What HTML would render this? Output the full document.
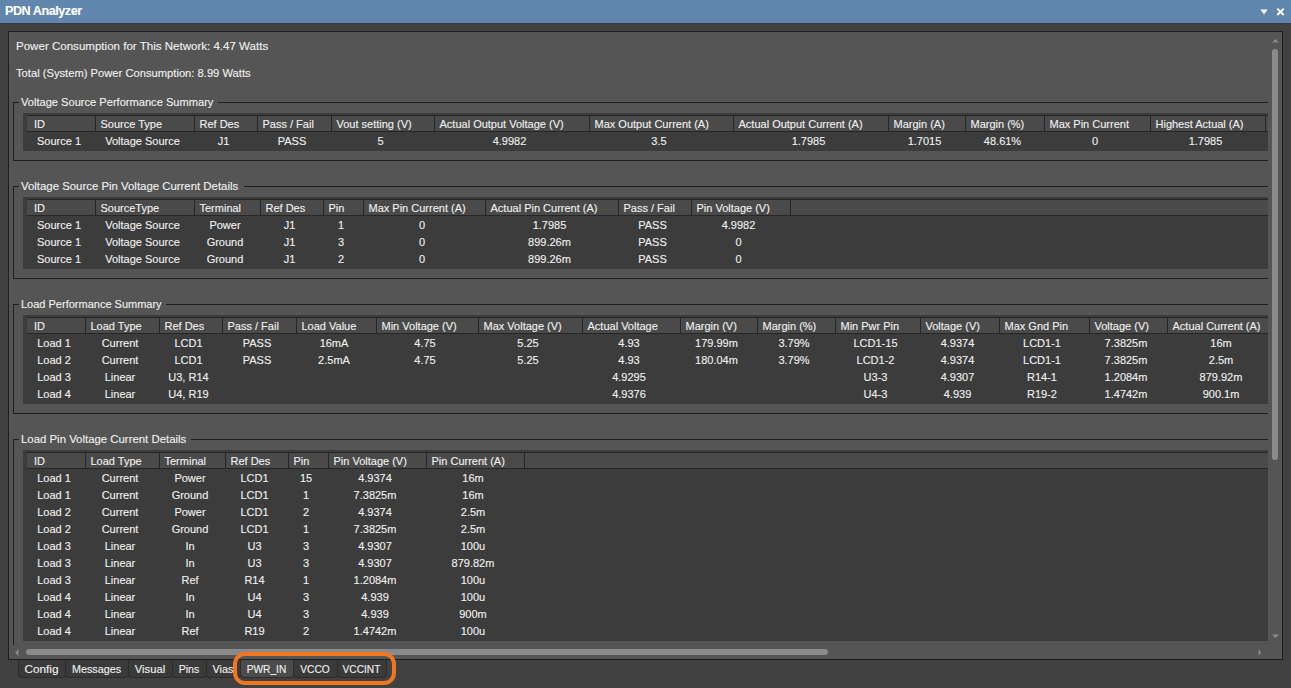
<!DOCTYPE html>
<html><head><meta charset="utf-8"><style>
html,body{margin:0;padding:0;}
body{width:1291px;height:688px;position:relative;overflow:hidden;background:#414141;font-family:"Liberation Sans",sans-serif;font-size:11px;}
div{position:absolute;white-space:pre;box-sizing:content-box;}
.t{-webkit-text-stroke:0.12px currentColor;}
</style></head><body>
<div style="left:0;top:0;width:1291px;height:23px;background:#6186ad;"></div>
<div style="left:0;top:23px;width:1291px;height:1px;background:#363a3e;"></div>
<div class="t" style="left:5px;top:5px;font-size:12.6px;line-height:12px;color:#ffffff;font-weight:bold;letter-spacing:-0.45px;">PDN Analyzer</div>
<svg style="position:absolute;left:1259px;top:8px" width="10" height="8" viewBox="0 0 10 8"><path d="M1.5 1.5 L8.5 1.5 L5 6.5 Z" fill="#fff"/></svg>
<svg style="position:absolute;left:1275px;top:7px" width="11" height="10" viewBox="0 0 11 10"><path d="M2.3 1.6 L8.7 8 M8.7 1.6 L2.3 8" stroke="#fff" stroke-width="1.9"/></svg>
<div style="left:8px;top:31px;width:1275px;height:629px;background:#1e1e1e;"></div>
<div style="left:9px;top:32px;width:1273px;height:627px;background:#555555;overflow:hidden;"></div>
<div class="t" style="left:16px;top:40px;font-size:11.55px;line-height:12px;color:#f0f0f0;font-weight:normal;">Power Consumption for This Network: 4.47 Watts</div>
<div class="t" style="left:16px;top:67px;font-size:11.2px;line-height:12px;color:#f0f0f0;font-weight:normal;">Total (System) Power Consumption: 8.99 Watts</div>
<div style="left:13px;top:102px;width:6px;height:1px;background:#1e1e1e;"></div>
<div style="left:218px;top:102px;width:1050px;height:1px;background:#1e1e1e;"></div>
<div style="left:13px;top:102px;width:1px;height:58px;background:#1e1e1e;"></div>
<div style="left:13px;top:160px;width:1255px;height:1px;background:#1e1e1e;"></div>
<div class="t" style="left:21px;top:96px;font-size:11.1px;line-height:12px;color:#f0f0f0;font-weight:normal;">Voltage Source Performance Summary</div>
<div style="left:23px;top:113px;width:1245px;height:38px;background:#3c3c3c;"></div>
<div style="left:27px;top:115px;width:1241px;height:1px;background:#262626;"></div>
<div style="left:27px;top:116px;width:1241px;height:15px;background:#4a4a4a;"></div>
<div style="left:27px;top:131px;width:1241px;height:1px;background:#262626;"></div>
<div style="left:95px;top:115px;width:1px;height:17px;background:#262626;"></div>
<div class="t" style="left:34px;top:118px;font-size:11px;line-height:12px;color:#f0f0f0;font-weight:normal;">ID</div>
<div style="left:194px;top:115px;width:1px;height:17px;background:#262626;"></div>
<div class="t" style="left:100.5px;top:118px;font-size:11px;line-height:12px;color:#f0f0f0;font-weight:normal;">Source Type</div>
<div style="left:257px;top:115px;width:1px;height:17px;background:#262626;"></div>
<div class="t" style="left:199.5px;top:118px;font-size:11px;line-height:12px;color:#f0f0f0;font-weight:normal;">Ref Des</div>
<div style="left:331px;top:115px;width:1px;height:17px;background:#262626;"></div>
<div class="t" style="left:262.5px;top:118px;font-size:11px;line-height:12px;color:#f0f0f0;font-weight:normal;">Pass / Fail</div>
<div style="left:434px;top:115px;width:1px;height:17px;background:#262626;"></div>
<div class="t" style="left:336.5px;top:118px;font-size:11px;line-height:12px;color:#f0f0f0;font-weight:normal;">Vout setting (V)</div>
<div style="left:589px;top:115px;width:1px;height:17px;background:#262626;"></div>
<div class="t" style="left:439.5px;top:118px;font-size:11px;line-height:12px;color:#f0f0f0;font-weight:normal;">Actual Output Voltage (V)</div>
<div style="left:733px;top:115px;width:1px;height:17px;background:#262626;"></div>
<div class="t" style="left:594.5px;top:118px;font-size:11px;line-height:12px;color:#f0f0f0;font-weight:normal;">Max Output Current (A)</div>
<div style="left:888px;top:115px;width:1px;height:17px;background:#262626;"></div>
<div class="t" style="left:738.5px;top:118px;font-size:11px;line-height:12px;color:#f0f0f0;font-weight:normal;">Actual Output Current (A)</div>
<div style="left:965px;top:115px;width:1px;height:17px;background:#262626;"></div>
<div class="t" style="left:893.5px;top:118px;font-size:11px;line-height:12px;color:#f0f0f0;font-weight:normal;">Margin (A)</div>
<div style="left:1044px;top:115px;width:1px;height:17px;background:#262626;"></div>
<div class="t" style="left:970.5px;top:118px;font-size:11px;line-height:12px;color:#f0f0f0;font-weight:normal;">Margin (%)</div>
<div style="left:1150px;top:115px;width:1px;height:17px;background:#262626;"></div>
<div class="t" style="left:1049.5px;top:118px;font-size:11px;line-height:12px;color:#f0f0f0;font-weight:normal;">Max Pin Current</div>
<div style="left:1265px;top:115px;width:1px;height:17px;background:#262626;"></div>
<div class="t" style="left:1155.5px;top:118px;font-size:11px;line-height:12px;color:#f0f0f0;font-weight:normal;">Highest Actual (A)</div>
<div class="t" style="left:27px;top:135px;font-size:11px;line-height:12px;color:#f0f0f0;font-weight:normal;width:64px;text-align:center;">Source 1</div>
<div class="t" style="left:95px;top:135px;font-size:11px;line-height:12px;color:#f0f0f0;font-weight:normal;width:95px;text-align:center;">Voltage Source</div>
<div class="t" style="left:194px;top:135px;font-size:11px;line-height:12px;color:#f0f0f0;font-weight:normal;width:59px;text-align:center;">J1</div>
<div class="t" style="left:257px;top:135px;font-size:11px;line-height:12px;color:#f0f0f0;font-weight:normal;width:70px;text-align:center;">PASS</div>
<div class="t" style="left:331px;top:135px;font-size:11px;line-height:12px;color:#f0f0f0;font-weight:normal;width:99px;text-align:center;">5</div>
<div class="t" style="left:434px;top:135px;font-size:11px;line-height:12px;color:#f0f0f0;font-weight:normal;width:151px;text-align:center;">4.9982</div>
<div class="t" style="left:589px;top:135px;font-size:11px;line-height:12px;color:#f0f0f0;font-weight:normal;width:140px;text-align:center;">3.5</div>
<div class="t" style="left:733px;top:135px;font-size:11px;line-height:12px;color:#f0f0f0;font-weight:normal;width:151px;text-align:center;">1.7985</div>
<div class="t" style="left:888px;top:135px;font-size:11px;line-height:12px;color:#f0f0f0;font-weight:normal;width:73px;text-align:center;">1.7015</div>
<div class="t" style="left:965px;top:135px;font-size:11px;line-height:12px;color:#f0f0f0;font-weight:normal;width:75px;text-align:center;">48.61%</div>
<div class="t" style="left:1044px;top:135px;font-size:11px;line-height:12px;color:#f0f0f0;font-weight:normal;width:102px;text-align:center;">0</div>
<div class="t" style="left:1150px;top:135px;font-size:11px;line-height:12px;color:#f0f0f0;font-weight:normal;width:111px;text-align:center;">1.7985</div>
<div style="left:13px;top:186px;width:6px;height:1px;background:#1e1e1e;"></div>
<div style="left:244px;top:186px;width:1024px;height:1px;background:#1e1e1e;"></div>
<div style="left:13px;top:186px;width:1px;height:92px;background:#1e1e1e;"></div>
<div style="left:13px;top:278px;width:1255px;height:1px;background:#1e1e1e;"></div>
<div class="t" style="left:21px;top:180px;font-size:11.4px;line-height:12px;color:#f0f0f0;font-weight:normal;">Voltage Source Pin Voltage Current Details</div>
<div style="left:23px;top:197px;width:1245px;height:72px;background:#3c3c3c;"></div>
<div style="left:27px;top:199px;width:1241px;height:1px;background:#262626;"></div>
<div style="left:27px;top:200px;width:1241px;height:15px;background:#4a4a4a;"></div>
<div style="left:27px;top:215px;width:1241px;height:1px;background:#262626;"></div>
<div style="left:95px;top:199px;width:1px;height:17px;background:#262626;"></div>
<div class="t" style="left:34px;top:202px;font-size:11px;line-height:12px;color:#f0f0f0;font-weight:normal;">ID</div>
<div style="left:194px;top:199px;width:1px;height:17px;background:#262626;"></div>
<div class="t" style="left:100.5px;top:202px;font-size:11px;line-height:12px;color:#f0f0f0;font-weight:normal;">SourceType</div>
<div style="left:260px;top:199px;width:1px;height:17px;background:#262626;"></div>
<div class="t" style="left:199.5px;top:202px;font-size:11px;line-height:12px;color:#f0f0f0;font-weight:normal;">Terminal</div>
<div style="left:323px;top:199px;width:1px;height:17px;background:#262626;"></div>
<div class="t" style="left:265.5px;top:202px;font-size:11px;line-height:12px;color:#f0f0f0;font-weight:normal;">Ref Des</div>
<div style="left:363px;top:199px;width:1px;height:17px;background:#262626;"></div>
<div class="t" style="left:328.5px;top:202px;font-size:11px;line-height:12px;color:#f0f0f0;font-weight:normal;">Pin</div>
<div style="left:485px;top:199px;width:1px;height:17px;background:#262626;"></div>
<div class="t" style="left:368.5px;top:202px;font-size:11px;line-height:12px;color:#f0f0f0;font-weight:normal;">Max Pin Current (A)</div>
<div style="left:618px;top:199px;width:1px;height:17px;background:#262626;"></div>
<div class="t" style="left:490.5px;top:202px;font-size:11px;line-height:12px;color:#f0f0f0;font-weight:normal;">Actual Pin Current (A)</div>
<div style="left:691px;top:199px;width:1px;height:17px;background:#262626;"></div>
<div class="t" style="left:623.5px;top:202px;font-size:11px;line-height:12px;color:#f0f0f0;font-weight:normal;">Pass / Fail</div>
<div style="left:790px;top:199px;width:1px;height:17px;background:#262626;"></div>
<div class="t" style="left:696.5px;top:202px;font-size:11px;line-height:12px;color:#f0f0f0;font-weight:normal;">Pin Voltage (V)</div>
<div class="t" style="left:27px;top:219px;font-size:11px;line-height:12px;color:#f0f0f0;font-weight:normal;width:64px;text-align:center;">Source 1</div>
<div class="t" style="left:95px;top:219px;font-size:11px;line-height:12px;color:#f0f0f0;font-weight:normal;width:95px;text-align:center;">Voltage Source</div>
<div class="t" style="left:194px;top:219px;font-size:11px;line-height:12px;color:#f0f0f0;font-weight:normal;width:62px;text-align:center;">Power</div>
<div class="t" style="left:260px;top:219px;font-size:11px;line-height:12px;color:#f0f0f0;font-weight:normal;width:59px;text-align:center;">J1</div>
<div class="t" style="left:323px;top:219px;font-size:11px;line-height:12px;color:#f0f0f0;font-weight:normal;width:36px;text-align:center;">1</div>
<div class="t" style="left:363px;top:219px;font-size:11px;line-height:12px;color:#f0f0f0;font-weight:normal;width:118px;text-align:center;">0</div>
<div class="t" style="left:485px;top:219px;font-size:11px;line-height:12px;color:#f0f0f0;font-weight:normal;width:129px;text-align:center;">1.7985</div>
<div class="t" style="left:618px;top:219px;font-size:11px;line-height:12px;color:#f0f0f0;font-weight:normal;width:69px;text-align:center;">PASS</div>
<div class="t" style="left:691px;top:219px;font-size:11px;line-height:12px;color:#f0f0f0;font-weight:normal;width:95px;text-align:center;">4.9982</div>
<div class="t" style="left:27px;top:236px;font-size:11px;line-height:12px;color:#f0f0f0;font-weight:normal;width:64px;text-align:center;">Source 1</div>
<div class="t" style="left:95px;top:236px;font-size:11px;line-height:12px;color:#f0f0f0;font-weight:normal;width:95px;text-align:center;">Voltage Source</div>
<div class="t" style="left:194px;top:236px;font-size:11px;line-height:12px;color:#f0f0f0;font-weight:normal;width:62px;text-align:center;">Ground</div>
<div class="t" style="left:260px;top:236px;font-size:11px;line-height:12px;color:#f0f0f0;font-weight:normal;width:59px;text-align:center;">J1</div>
<div class="t" style="left:323px;top:236px;font-size:11px;line-height:12px;color:#f0f0f0;font-weight:normal;width:36px;text-align:center;">3</div>
<div class="t" style="left:363px;top:236px;font-size:11px;line-height:12px;color:#f0f0f0;font-weight:normal;width:118px;text-align:center;">0</div>
<div class="t" style="left:485px;top:236px;font-size:11px;line-height:12px;color:#f0f0f0;font-weight:normal;width:129px;text-align:center;">899.26m</div>
<div class="t" style="left:618px;top:236px;font-size:11px;line-height:12px;color:#f0f0f0;font-weight:normal;width:69px;text-align:center;">PASS</div>
<div class="t" style="left:691px;top:236px;font-size:11px;line-height:12px;color:#f0f0f0;font-weight:normal;width:95px;text-align:center;">0</div>
<div class="t" style="left:27px;top:253px;font-size:11px;line-height:12px;color:#f0f0f0;font-weight:normal;width:64px;text-align:center;">Source 1</div>
<div class="t" style="left:95px;top:253px;font-size:11px;line-height:12px;color:#f0f0f0;font-weight:normal;width:95px;text-align:center;">Voltage Source</div>
<div class="t" style="left:194px;top:253px;font-size:11px;line-height:12px;color:#f0f0f0;font-weight:normal;width:62px;text-align:center;">Ground</div>
<div class="t" style="left:260px;top:253px;font-size:11px;line-height:12px;color:#f0f0f0;font-weight:normal;width:59px;text-align:center;">J1</div>
<div class="t" style="left:323px;top:253px;font-size:11px;line-height:12px;color:#f0f0f0;font-weight:normal;width:36px;text-align:center;">2</div>
<div class="t" style="left:363px;top:253px;font-size:11px;line-height:12px;color:#f0f0f0;font-weight:normal;width:118px;text-align:center;">0</div>
<div class="t" style="left:485px;top:253px;font-size:11px;line-height:12px;color:#f0f0f0;font-weight:normal;width:129px;text-align:center;">899.26m</div>
<div class="t" style="left:618px;top:253px;font-size:11px;line-height:12px;color:#f0f0f0;font-weight:normal;width:69px;text-align:center;">PASS</div>
<div class="t" style="left:691px;top:253px;font-size:11px;line-height:12px;color:#f0f0f0;font-weight:normal;width:95px;text-align:center;">0</div>
<div style="left:13px;top:304px;width:6px;height:1px;background:#1e1e1e;"></div>
<div style="left:166px;top:304px;width:1102px;height:1px;background:#1e1e1e;"></div>
<div style="left:13px;top:304px;width:1px;height:109px;background:#1e1e1e;"></div>
<div style="left:13px;top:413px;width:1255px;height:1px;background:#1e1e1e;"></div>
<div class="t" style="left:21px;top:298px;font-size:11px;line-height:12px;color:#f0f0f0;font-weight:normal;">Load Performance Summary</div>
<div style="left:23px;top:315px;width:1245px;height:89px;background:#3c3c3c;"></div>
<div style="left:27px;top:317px;width:1241px;height:1px;background:#262626;"></div>
<div style="left:27px;top:318px;width:1241px;height:15px;background:#4a4a4a;"></div>
<div style="left:27px;top:333px;width:1241px;height:1px;background:#262626;"></div>
<div style="left:85px;top:317px;width:1px;height:17px;background:#262626;"></div>
<div class="t" style="left:34px;top:320px;font-size:11px;line-height:12px;color:#f0f0f0;font-weight:normal;">ID</div>
<div style="left:159px;top:317px;width:1px;height:17px;background:#262626;"></div>
<div class="t" style="left:90.5px;top:320px;font-size:11px;line-height:12px;color:#f0f0f0;font-weight:normal;">Load Type</div>
<div style="left:222px;top:317px;width:1px;height:17px;background:#262626;"></div>
<div class="t" style="left:164.5px;top:320px;font-size:11px;line-height:12px;color:#f0f0f0;font-weight:normal;">Ref Des</div>
<div style="left:296px;top:317px;width:1px;height:17px;background:#262626;"></div>
<div class="t" style="left:227.5px;top:320px;font-size:11px;line-height:12px;color:#f0f0f0;font-weight:normal;">Pass / Fail</div>
<div style="left:376px;top:317px;width:1px;height:17px;background:#262626;"></div>
<div class="t" style="left:301.5px;top:320px;font-size:11px;line-height:12px;color:#f0f0f0;font-weight:normal;">Load Value</div>
<div style="left:478px;top:317px;width:1px;height:17px;background:#262626;"></div>
<div class="t" style="left:381.5px;top:320px;font-size:11px;line-height:12px;color:#f0f0f0;font-weight:normal;">Min Voltage (V)</div>
<div style="left:582px;top:317px;width:1px;height:17px;background:#262626;"></div>
<div class="t" style="left:483.5px;top:320px;font-size:11px;line-height:12px;color:#f0f0f0;font-weight:normal;">Max Voltage (V)</div>
<div style="left:680px;top:317px;width:1px;height:17px;background:#262626;"></div>
<div class="t" style="left:587.5px;top:320px;font-size:11px;line-height:12px;color:#f0f0f0;font-weight:normal;">Actual Voltage</div>
<div style="left:757px;top:317px;width:1px;height:17px;background:#262626;"></div>
<div class="t" style="left:685.5px;top:320px;font-size:11px;line-height:12px;color:#f0f0f0;font-weight:normal;">Margin (V)</div>
<div style="left:835px;top:317px;width:1px;height:17px;background:#262626;"></div>
<div class="t" style="left:762.5px;top:320px;font-size:11px;line-height:12px;color:#f0f0f0;font-weight:normal;">Margin (%)</div>
<div style="left:920px;top:317px;width:1px;height:17px;background:#262626;"></div>
<div class="t" style="left:840.5px;top:320px;font-size:11px;line-height:12px;color:#f0f0f0;font-weight:normal;">Min Pwr Pin</div>
<div style="left:999px;top:317px;width:1px;height:17px;background:#262626;"></div>
<div class="t" style="left:925.5px;top:320px;font-size:11px;line-height:12px;color:#f0f0f0;font-weight:normal;">Voltage (V)</div>
<div style="left:1089px;top:317px;width:1px;height:17px;background:#262626;"></div>
<div class="t" style="left:1004.5px;top:320px;font-size:11px;line-height:12px;color:#f0f0f0;font-weight:normal;">Max Gnd Pin</div>
<div style="left:1167px;top:317px;width:1px;height:17px;background:#262626;"></div>
<div class="t" style="left:1094.5px;top:320px;font-size:11px;line-height:12px;color:#f0f0f0;font-weight:normal;">Voltage (V)</div>
<div class="t" style="left:1172.5px;top:320px;font-size:11px;line-height:12px;color:#f0f0f0;font-weight:normal;">Actual Current (A)</div>
<div class="t" style="left:27px;top:337px;font-size:11px;line-height:12px;color:#f0f0f0;font-weight:normal;width:54px;text-align:center;">Load 1</div>
<div class="t" style="left:85px;top:337px;font-size:11px;line-height:12px;color:#f0f0f0;font-weight:normal;width:70px;text-align:center;">Current</div>
<div class="t" style="left:159px;top:337px;font-size:11px;line-height:12px;color:#f0f0f0;font-weight:normal;width:59px;text-align:center;">LCD1</div>
<div class="t" style="left:222px;top:337px;font-size:11px;line-height:12px;color:#f0f0f0;font-weight:normal;width:70px;text-align:center;">PASS</div>
<div class="t" style="left:296px;top:337px;font-size:11px;line-height:12px;color:#f0f0f0;font-weight:normal;width:76px;text-align:center;">16mA</div>
<div class="t" style="left:376px;top:337px;font-size:11px;line-height:12px;color:#f0f0f0;font-weight:normal;width:98px;text-align:center;">4.75</div>
<div class="t" style="left:478px;top:337px;font-size:11px;line-height:12px;color:#f0f0f0;font-weight:normal;width:100px;text-align:center;">5.25</div>
<div class="t" style="left:582px;top:337px;font-size:11px;line-height:12px;color:#f0f0f0;font-weight:normal;width:94px;text-align:center;">4.93</div>
<div class="t" style="left:680px;top:337px;font-size:11px;line-height:12px;color:#f0f0f0;font-weight:normal;width:73px;text-align:center;">179.99m</div>
<div class="t" style="left:757px;top:337px;font-size:11px;line-height:12px;color:#f0f0f0;font-weight:normal;width:74px;text-align:center;">3.79%</div>
<div class="t" style="left:835px;top:337px;font-size:11px;line-height:12px;color:#f0f0f0;font-weight:normal;width:81px;text-align:center;">LCD1-15</div>
<div class="t" style="left:920px;top:337px;font-size:11px;line-height:12px;color:#f0f0f0;font-weight:normal;width:75px;text-align:center;">4.9374</div>
<div class="t" style="left:999px;top:337px;font-size:11px;line-height:12px;color:#f0f0f0;font-weight:normal;width:86px;text-align:center;">LCD1-1</div>
<div class="t" style="left:1089px;top:337px;font-size:11px;line-height:12px;color:#f0f0f0;font-weight:normal;width:74px;text-align:center;">7.3825m</div>
<div class="t" style="left:1167px;top:337px;font-size:11px;line-height:12px;color:#f0f0f0;font-weight:normal;width:108px;text-align:center;">16m</div>
<div class="t" style="left:27px;top:354px;font-size:11px;line-height:12px;color:#f0f0f0;font-weight:normal;width:54px;text-align:center;">Load 2</div>
<div class="t" style="left:85px;top:354px;font-size:11px;line-height:12px;color:#f0f0f0;font-weight:normal;width:70px;text-align:center;">Current</div>
<div class="t" style="left:159px;top:354px;font-size:11px;line-height:12px;color:#f0f0f0;font-weight:normal;width:59px;text-align:center;">LCD1</div>
<div class="t" style="left:222px;top:354px;font-size:11px;line-height:12px;color:#f0f0f0;font-weight:normal;width:70px;text-align:center;">PASS</div>
<div class="t" style="left:296px;top:354px;font-size:11px;line-height:12px;color:#f0f0f0;font-weight:normal;width:76px;text-align:center;">2.5mA</div>
<div class="t" style="left:376px;top:354px;font-size:11px;line-height:12px;color:#f0f0f0;font-weight:normal;width:98px;text-align:center;">4.75</div>
<div class="t" style="left:478px;top:354px;font-size:11px;line-height:12px;color:#f0f0f0;font-weight:normal;width:100px;text-align:center;">5.25</div>
<div class="t" style="left:582px;top:354px;font-size:11px;line-height:12px;color:#f0f0f0;font-weight:normal;width:94px;text-align:center;">4.93</div>
<div class="t" style="left:680px;top:354px;font-size:11px;line-height:12px;color:#f0f0f0;font-weight:normal;width:73px;text-align:center;">180.04m</div>
<div class="t" style="left:757px;top:354px;font-size:11px;line-height:12px;color:#f0f0f0;font-weight:normal;width:74px;text-align:center;">3.79%</div>
<div class="t" style="left:835px;top:354px;font-size:11px;line-height:12px;color:#f0f0f0;font-weight:normal;width:81px;text-align:center;">LCD1-2</div>
<div class="t" style="left:920px;top:354px;font-size:11px;line-height:12px;color:#f0f0f0;font-weight:normal;width:75px;text-align:center;">4.9374</div>
<div class="t" style="left:999px;top:354px;font-size:11px;line-height:12px;color:#f0f0f0;font-weight:normal;width:86px;text-align:center;">LCD1-1</div>
<div class="t" style="left:1089px;top:354px;font-size:11px;line-height:12px;color:#f0f0f0;font-weight:normal;width:74px;text-align:center;">7.3825m</div>
<div class="t" style="left:1167px;top:354px;font-size:11px;line-height:12px;color:#f0f0f0;font-weight:normal;width:108px;text-align:center;">2.5m</div>
<div class="t" style="left:27px;top:371px;font-size:11px;line-height:12px;color:#f0f0f0;font-weight:normal;width:54px;text-align:center;">Load 3</div>
<div class="t" style="left:85px;top:371px;font-size:11px;line-height:12px;color:#f0f0f0;font-weight:normal;width:70px;text-align:center;">Linear</div>
<div class="t" style="left:159px;top:371px;font-size:11px;line-height:12px;color:#f0f0f0;font-weight:normal;width:59px;text-align:center;">U3, R14</div>
<div class="t" style="left:582px;top:371px;font-size:11px;line-height:12px;color:#f0f0f0;font-weight:normal;width:94px;text-align:center;">4.9295</div>
<div class="t" style="left:835px;top:371px;font-size:11px;line-height:12px;color:#f0f0f0;font-weight:normal;width:81px;text-align:center;">U3-3</div>
<div class="t" style="left:920px;top:371px;font-size:11px;line-height:12px;color:#f0f0f0;font-weight:normal;width:75px;text-align:center;">4.9307</div>
<div class="t" style="left:999px;top:371px;font-size:11px;line-height:12px;color:#f0f0f0;font-weight:normal;width:86px;text-align:center;">R14-1</div>
<div class="t" style="left:1089px;top:371px;font-size:11px;line-height:12px;color:#f0f0f0;font-weight:normal;width:74px;text-align:center;">1.2084m</div>
<div class="t" style="left:1167px;top:371px;font-size:11px;line-height:12px;color:#f0f0f0;font-weight:normal;width:108px;text-align:center;">879.92m</div>
<div class="t" style="left:27px;top:388px;font-size:11px;line-height:12px;color:#f0f0f0;font-weight:normal;width:54px;text-align:center;">Load 4</div>
<div class="t" style="left:85px;top:388px;font-size:11px;line-height:12px;color:#f0f0f0;font-weight:normal;width:70px;text-align:center;">Linear</div>
<div class="t" style="left:159px;top:388px;font-size:11px;line-height:12px;color:#f0f0f0;font-weight:normal;width:59px;text-align:center;">U4, R19</div>
<div class="t" style="left:582px;top:388px;font-size:11px;line-height:12px;color:#f0f0f0;font-weight:normal;width:94px;text-align:center;">4.9376</div>
<div class="t" style="left:835px;top:388px;font-size:11px;line-height:12px;color:#f0f0f0;font-weight:normal;width:81px;text-align:center;">U4-3</div>
<div class="t" style="left:920px;top:388px;font-size:11px;line-height:12px;color:#f0f0f0;font-weight:normal;width:75px;text-align:center;">4.939</div>
<div class="t" style="left:999px;top:388px;font-size:11px;line-height:12px;color:#f0f0f0;font-weight:normal;width:86px;text-align:center;">R19-2</div>
<div class="t" style="left:1089px;top:388px;font-size:11px;line-height:12px;color:#f0f0f0;font-weight:normal;width:74px;text-align:center;">1.4742m</div>
<div class="t" style="left:1167px;top:388px;font-size:11px;line-height:12px;color:#f0f0f0;font-weight:normal;width:108px;text-align:center;">900.1m</div>
<div style="left:13px;top:439px;width:6px;height:1px;background:#1e1e1e;"></div>
<div style="left:191px;top:439px;width:1077px;height:1px;background:#1e1e1e;"></div>
<div style="left:13px;top:439px;width:1px;height:206px;background:#1e1e1e;"></div>
<div class="t" style="left:21px;top:433px;font-size:11.4px;line-height:12px;color:#f0f0f0;font-weight:normal;">Load Pin Voltage Current Details</div>
<div style="left:23px;top:450px;width:1245px;height:191px;background:#3c3c3c;"></div>
<div style="left:27px;top:452px;width:1241px;height:1px;background:#262626;"></div>
<div style="left:27px;top:453px;width:1241px;height:15px;background:#4a4a4a;"></div>
<div style="left:27px;top:468px;width:1241px;height:1px;background:#262626;"></div>
<div style="left:85px;top:452px;width:1px;height:17px;background:#262626;"></div>
<div class="t" style="left:34px;top:455px;font-size:11px;line-height:12px;color:#f0f0f0;font-weight:normal;">ID</div>
<div style="left:159px;top:452px;width:1px;height:17px;background:#262626;"></div>
<div class="t" style="left:90.5px;top:455px;font-size:11px;line-height:12px;color:#f0f0f0;font-weight:normal;">Load Type</div>
<div style="left:225px;top:452px;width:1px;height:17px;background:#262626;"></div>
<div class="t" style="left:164.5px;top:455px;font-size:11px;line-height:12px;color:#f0f0f0;font-weight:normal;">Terminal</div>
<div style="left:288px;top:452px;width:1px;height:17px;background:#262626;"></div>
<div class="t" style="left:230.5px;top:455px;font-size:11px;line-height:12px;color:#f0f0f0;font-weight:normal;">Ref Des</div>
<div style="left:328px;top:452px;width:1px;height:17px;background:#262626;"></div>
<div class="t" style="left:293.5px;top:455px;font-size:11px;line-height:12px;color:#f0f0f0;font-weight:normal;">Pin</div>
<div style="left:426px;top:452px;width:1px;height:17px;background:#262626;"></div>
<div class="t" style="left:333.5px;top:455px;font-size:11px;line-height:12px;color:#f0f0f0;font-weight:normal;">Pin Voltage (V)</div>
<div style="left:524px;top:452px;width:1px;height:17px;background:#262626;"></div>
<div class="t" style="left:431.5px;top:455px;font-size:11px;line-height:12px;color:#f0f0f0;font-weight:normal;">Pin Current (A)</div>
<div class="t" style="left:27px;top:472px;font-size:11px;line-height:12px;color:#f0f0f0;font-weight:normal;width:54px;text-align:center;">Load 1</div>
<div class="t" style="left:85px;top:472px;font-size:11px;line-height:12px;color:#f0f0f0;font-weight:normal;width:70px;text-align:center;">Current</div>
<div class="t" style="left:159px;top:472px;font-size:11px;line-height:12px;color:#f0f0f0;font-weight:normal;width:62px;text-align:center;">Power</div>
<div class="t" style="left:225px;top:472px;font-size:11px;line-height:12px;color:#f0f0f0;font-weight:normal;width:59px;text-align:center;">LCD1</div>
<div class="t" style="left:288px;top:472px;font-size:11px;line-height:12px;color:#f0f0f0;font-weight:normal;width:36px;text-align:center;">15</div>
<div class="t" style="left:328px;top:472px;font-size:11px;line-height:12px;color:#f0f0f0;font-weight:normal;width:94px;text-align:center;">4.9374</div>
<div class="t" style="left:426px;top:472px;font-size:11px;line-height:12px;color:#f0f0f0;font-weight:normal;width:94px;text-align:center;">16m</div>
<div class="t" style="left:27px;top:489px;font-size:11px;line-height:12px;color:#f0f0f0;font-weight:normal;width:54px;text-align:center;">Load 1</div>
<div class="t" style="left:85px;top:489px;font-size:11px;line-height:12px;color:#f0f0f0;font-weight:normal;width:70px;text-align:center;">Current</div>
<div class="t" style="left:159px;top:489px;font-size:11px;line-height:12px;color:#f0f0f0;font-weight:normal;width:62px;text-align:center;">Ground</div>
<div class="t" style="left:225px;top:489px;font-size:11px;line-height:12px;color:#f0f0f0;font-weight:normal;width:59px;text-align:center;">LCD1</div>
<div class="t" style="left:288px;top:489px;font-size:11px;line-height:12px;color:#f0f0f0;font-weight:normal;width:36px;text-align:center;">1</div>
<div class="t" style="left:328px;top:489px;font-size:11px;line-height:12px;color:#f0f0f0;font-weight:normal;width:94px;text-align:center;">7.3825m</div>
<div class="t" style="left:426px;top:489px;font-size:11px;line-height:12px;color:#f0f0f0;font-weight:normal;width:94px;text-align:center;">16m</div>
<div class="t" style="left:27px;top:506px;font-size:11px;line-height:12px;color:#f0f0f0;font-weight:normal;width:54px;text-align:center;">Load 2</div>
<div class="t" style="left:85px;top:506px;font-size:11px;line-height:12px;color:#f0f0f0;font-weight:normal;width:70px;text-align:center;">Current</div>
<div class="t" style="left:159px;top:506px;font-size:11px;line-height:12px;color:#f0f0f0;font-weight:normal;width:62px;text-align:center;">Power</div>
<div class="t" style="left:225px;top:506px;font-size:11px;line-height:12px;color:#f0f0f0;font-weight:normal;width:59px;text-align:center;">LCD1</div>
<div class="t" style="left:288px;top:506px;font-size:11px;line-height:12px;color:#f0f0f0;font-weight:normal;width:36px;text-align:center;">2</div>
<div class="t" style="left:328px;top:506px;font-size:11px;line-height:12px;color:#f0f0f0;font-weight:normal;width:94px;text-align:center;">4.9374</div>
<div class="t" style="left:426px;top:506px;font-size:11px;line-height:12px;color:#f0f0f0;font-weight:normal;width:94px;text-align:center;">2.5m</div>
<div class="t" style="left:27px;top:523px;font-size:11px;line-height:12px;color:#f0f0f0;font-weight:normal;width:54px;text-align:center;">Load 2</div>
<div class="t" style="left:85px;top:523px;font-size:11px;line-height:12px;color:#f0f0f0;font-weight:normal;width:70px;text-align:center;">Current</div>
<div class="t" style="left:159px;top:523px;font-size:11px;line-height:12px;color:#f0f0f0;font-weight:normal;width:62px;text-align:center;">Ground</div>
<div class="t" style="left:225px;top:523px;font-size:11px;line-height:12px;color:#f0f0f0;font-weight:normal;width:59px;text-align:center;">LCD1</div>
<div class="t" style="left:288px;top:523px;font-size:11px;line-height:12px;color:#f0f0f0;font-weight:normal;width:36px;text-align:center;">1</div>
<div class="t" style="left:328px;top:523px;font-size:11px;line-height:12px;color:#f0f0f0;font-weight:normal;width:94px;text-align:center;">7.3825m</div>
<div class="t" style="left:426px;top:523px;font-size:11px;line-height:12px;color:#f0f0f0;font-weight:normal;width:94px;text-align:center;">2.5m</div>
<div class="t" style="left:27px;top:540px;font-size:11px;line-height:12px;color:#f0f0f0;font-weight:normal;width:54px;text-align:center;">Load 3</div>
<div class="t" style="left:85px;top:540px;font-size:11px;line-height:12px;color:#f0f0f0;font-weight:normal;width:70px;text-align:center;">Linear</div>
<div class="t" style="left:159px;top:540px;font-size:11px;line-height:12px;color:#f0f0f0;font-weight:normal;width:62px;text-align:center;">In</div>
<div class="t" style="left:225px;top:540px;font-size:11px;line-height:12px;color:#f0f0f0;font-weight:normal;width:59px;text-align:center;">U3</div>
<div class="t" style="left:288px;top:540px;font-size:11px;line-height:12px;color:#f0f0f0;font-weight:normal;width:36px;text-align:center;">3</div>
<div class="t" style="left:328px;top:540px;font-size:11px;line-height:12px;color:#f0f0f0;font-weight:normal;width:94px;text-align:center;">4.9307</div>
<div class="t" style="left:426px;top:540px;font-size:11px;line-height:12px;color:#f0f0f0;font-weight:normal;width:94px;text-align:center;">100u</div>
<div class="t" style="left:27px;top:557px;font-size:11px;line-height:12px;color:#f0f0f0;font-weight:normal;width:54px;text-align:center;">Load 3</div>
<div class="t" style="left:85px;top:557px;font-size:11px;line-height:12px;color:#f0f0f0;font-weight:normal;width:70px;text-align:center;">Linear</div>
<div class="t" style="left:159px;top:557px;font-size:11px;line-height:12px;color:#f0f0f0;font-weight:normal;width:62px;text-align:center;">In</div>
<div class="t" style="left:225px;top:557px;font-size:11px;line-height:12px;color:#f0f0f0;font-weight:normal;width:59px;text-align:center;">U3</div>
<div class="t" style="left:288px;top:557px;font-size:11px;line-height:12px;color:#f0f0f0;font-weight:normal;width:36px;text-align:center;">3</div>
<div class="t" style="left:328px;top:557px;font-size:11px;line-height:12px;color:#f0f0f0;font-weight:normal;width:94px;text-align:center;">4.9307</div>
<div class="t" style="left:426px;top:557px;font-size:11px;line-height:12px;color:#f0f0f0;font-weight:normal;width:94px;text-align:center;">879.82m</div>
<div class="t" style="left:27px;top:574px;font-size:11px;line-height:12px;color:#f0f0f0;font-weight:normal;width:54px;text-align:center;">Load 3</div>
<div class="t" style="left:85px;top:574px;font-size:11px;line-height:12px;color:#f0f0f0;font-weight:normal;width:70px;text-align:center;">Linear</div>
<div class="t" style="left:159px;top:574px;font-size:11px;line-height:12px;color:#f0f0f0;font-weight:normal;width:62px;text-align:center;">Ref</div>
<div class="t" style="left:225px;top:574px;font-size:11px;line-height:12px;color:#f0f0f0;font-weight:normal;width:59px;text-align:center;">R14</div>
<div class="t" style="left:288px;top:574px;font-size:11px;line-height:12px;color:#f0f0f0;font-weight:normal;width:36px;text-align:center;">1</div>
<div class="t" style="left:328px;top:574px;font-size:11px;line-height:12px;color:#f0f0f0;font-weight:normal;width:94px;text-align:center;">1.2084m</div>
<div class="t" style="left:426px;top:574px;font-size:11px;line-height:12px;color:#f0f0f0;font-weight:normal;width:94px;text-align:center;">100u</div>
<div class="t" style="left:27px;top:591px;font-size:11px;line-height:12px;color:#f0f0f0;font-weight:normal;width:54px;text-align:center;">Load 4</div>
<div class="t" style="left:85px;top:591px;font-size:11px;line-height:12px;color:#f0f0f0;font-weight:normal;width:70px;text-align:center;">Linear</div>
<div class="t" style="left:159px;top:591px;font-size:11px;line-height:12px;color:#f0f0f0;font-weight:normal;width:62px;text-align:center;">In</div>
<div class="t" style="left:225px;top:591px;font-size:11px;line-height:12px;color:#f0f0f0;font-weight:normal;width:59px;text-align:center;">U4</div>
<div class="t" style="left:288px;top:591px;font-size:11px;line-height:12px;color:#f0f0f0;font-weight:normal;width:36px;text-align:center;">3</div>
<div class="t" style="left:328px;top:591px;font-size:11px;line-height:12px;color:#f0f0f0;font-weight:normal;width:94px;text-align:center;">4.939</div>
<div class="t" style="left:426px;top:591px;font-size:11px;line-height:12px;color:#f0f0f0;font-weight:normal;width:94px;text-align:center;">100u</div>
<div class="t" style="left:27px;top:608px;font-size:11px;line-height:12px;color:#f0f0f0;font-weight:normal;width:54px;text-align:center;">Load 4</div>
<div class="t" style="left:85px;top:608px;font-size:11px;line-height:12px;color:#f0f0f0;font-weight:normal;width:70px;text-align:center;">Linear</div>
<div class="t" style="left:159px;top:608px;font-size:11px;line-height:12px;color:#f0f0f0;font-weight:normal;width:62px;text-align:center;">In</div>
<div class="t" style="left:225px;top:608px;font-size:11px;line-height:12px;color:#f0f0f0;font-weight:normal;width:59px;text-align:center;">U4</div>
<div class="t" style="left:288px;top:608px;font-size:11px;line-height:12px;color:#f0f0f0;font-weight:normal;width:36px;text-align:center;">3</div>
<div class="t" style="left:328px;top:608px;font-size:11px;line-height:12px;color:#f0f0f0;font-weight:normal;width:94px;text-align:center;">4.939</div>
<div class="t" style="left:426px;top:608px;font-size:11px;line-height:12px;color:#f0f0f0;font-weight:normal;width:94px;text-align:center;">900m</div>
<div class="t" style="left:27px;top:625px;font-size:11px;line-height:12px;color:#f0f0f0;font-weight:normal;width:54px;text-align:center;">Load 4</div>
<div class="t" style="left:85px;top:625px;font-size:11px;line-height:12px;color:#f0f0f0;font-weight:normal;width:70px;text-align:center;">Linear</div>
<div class="t" style="left:159px;top:625px;font-size:11px;line-height:12px;color:#f0f0f0;font-weight:normal;width:62px;text-align:center;">Ref</div>
<div class="t" style="left:225px;top:625px;font-size:11px;line-height:12px;color:#f0f0f0;font-weight:normal;width:59px;text-align:center;">R19</div>
<div class="t" style="left:288px;top:625px;font-size:11px;line-height:12px;color:#f0f0f0;font-weight:normal;width:36px;text-align:center;">2</div>
<div class="t" style="left:328px;top:625px;font-size:11px;line-height:12px;color:#f0f0f0;font-weight:normal;width:94px;text-align:center;">1.4742m</div>
<div class="t" style="left:426px;top:625px;font-size:11px;line-height:12px;color:#f0f0f0;font-weight:normal;width:94px;text-align:center;">100u</div>
<div style="left:1269px;top:32px;width:13px;height:614px;background:#555555;"></div>
<svg style="position:absolute;left:1271px;top:38px" width="9" height="6" viewBox="0 0 9 6"><path d="M1 4.5 L8 4.5 L4.5 1 Z" fill="#8a8a8a"/></svg>
<div style="left:1272px;top:49px;width:6px;height:411px;background:#8b8b8b;border-radius:3px;"></div>
<svg style="position:absolute;left:1271px;top:633px" width="9" height="6" viewBox="0 0 9 6"><path d="M1 1.5 L8 1.5 L4.5 5 Z" fill="#8a8a8a"/></svg>
<div style="left:9px;top:646px;width:1260px;height:13px;background:#555555;"></div>
<svg style="position:absolute;left:14px;top:648px" width="6" height="9" viewBox="0 0 6 9"><path d="M4.5 1 L4.5 8 L1 4.5 Z" fill="#8a8a8a"/></svg>
<div style="left:26px;top:649px;width:802px;height:6px;background:#8a8a8a;border-radius:3px;"></div>
<svg style="position:absolute;left:1257px;top:648px" width="6" height="9" viewBox="0 0 6 9"><path d="M1.5 1.5 L1.5 7.5 L4.5 4.5 Z" fill="#8a8a8a"/></svg>
<div style="left:18px;top:660px;width:46px;height:17px;background:#3a3a3a;border:1px solid #2c2c2c;border-top:none;border-radius:0 0 4px 4px;"></div>
<div class="t" style="left:18px;top:663px;font-size:11.8px;line-height:12px;color:#f0f0f0;font-weight:normal;width:47px;text-align:center;">Config</div>
<div style="left:65px;top:660px;width:62px;height:17px;background:#3a3a3a;border:1px solid #2c2c2c;border-top:none;border-radius:0 0 4px 4px;"></div>
<div class="t" style="left:65px;top:663px;font-size:10.8px;line-height:12px;color:#f0f0f0;font-weight:normal;width:63px;text-align:center;">Messages</div>
<div style="left:128px;top:660px;width:43px;height:17px;background:#3a3a3a;border:1px solid #2c2c2c;border-top:none;border-radius:0 0 4px 4px;"></div>
<div class="t" style="left:128px;top:663px;font-size:11.2px;line-height:12px;color:#f0f0f0;font-weight:normal;width:44px;text-align:center;">Visual</div>
<div style="left:172px;top:660px;width:33px;height:17px;background:#3a3a3a;border:1px solid #2c2c2c;border-top:none;border-radius:0 0 4px 4px;"></div>
<div class="t" style="left:172px;top:663px;font-size:10.6px;line-height:12px;color:#f0f0f0;font-weight:normal;width:34px;text-align:center;">Pins</div>
<div style="left:206px;top:660px;width:33px;height:17px;background:#3a3a3a;border:1px solid #2c2c2c;border-top:none;border-radius:0 0 4px 4px;"></div>
<div class="t" style="left:206px;top:663px;font-size:10.8px;line-height:12px;color:#f0f0f0;font-weight:normal;width:34px;text-align:center;">Vias</div>
<div style="left:240px;top:660px;width:52px;height:17px;background:#4b4b4b;border:1px solid #2c2c2c;border-top:none;border-radius:0 0 4px 4px;"></div>
<div class="t" style="left:240px;top:664px;font-size:10.2px;line-height:12px;color:#f0f0f0;font-weight:normal;width:53px;text-align:center;">PWR_IN</div>
<div style="left:293px;top:660px;width:43px;height:17px;background:#3a3a3a;border:1px solid #2c2c2c;border-top:none;border-radius:0 0 4px 4px;"></div>
<div class="t" style="left:293px;top:664px;font-size:10.2px;line-height:12px;color:#f0f0f0;font-weight:normal;width:44px;text-align:center;">VCCO</div>
<div style="left:337px;top:660px;width:48px;height:17px;background:#3a3a3a;border:1px solid #2c2c2c;border-top:none;border-radius:0 0 4px 4px;"></div>
<div class="t" style="left:337px;top:664px;font-size:10.2px;line-height:12px;color:#f0f0f0;font-weight:normal;width:49px;text-align:center;">VCCINT</div>
<div style="left:233px;top:652px;width:155px;height:25px;border:4px solid #f27620;border-radius:12px;"></div>
</body></html>
